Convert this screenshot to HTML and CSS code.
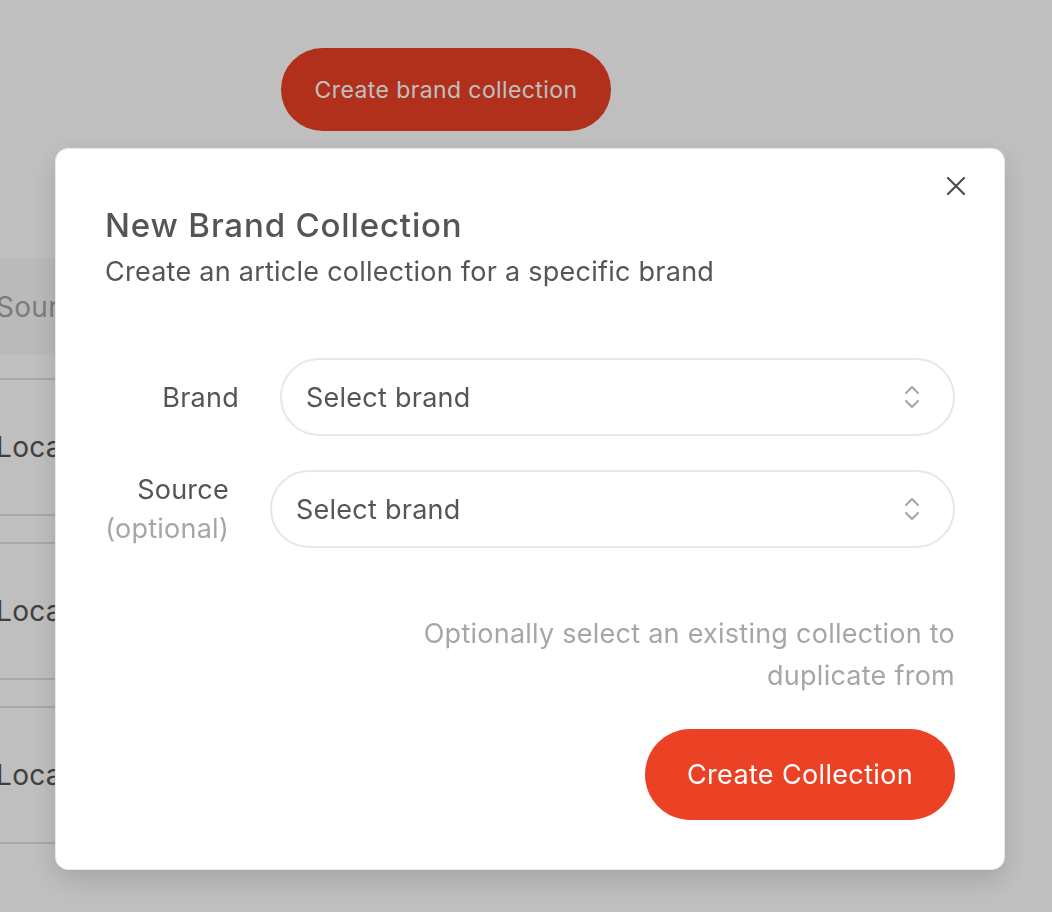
FILE: index.html
```html
<!DOCTYPE html>
<html lang="en">
<head>
<meta charset="utf-8">
<title>New Brand Collection</title>
<link rel="stylesheet" href="styles.css">
</head>
<body>
<main class="page">
  <div class="toolbar">
    <button class="btn btn-bg" type="button">Create brand collection</button>
  </div>
  <div class="table">
    <div class="thead"><span class="th">Source</span></div>
    <div class="trow"><span class="td">Local</span></div>
    <div class="trow"><span class="td">Local</span></div>
    <div class="trow"><span class="td">Local</span></div>
  </div>
</main>

<div class="overlay"></div>

<section class="modal" role="dialog" aria-labelledby="modal-title">
  <button class="close" type="button" aria-label="Close">
    <svg width="20" height="20" viewBox="0 0 20 20" fill="none" stroke="#4d4d4d" stroke-width="2.2" stroke-linecap="round"><path d="M2 2 L18 18 M18 2 L2 18"/></svg>
  </button>
  <h2 class="title" id="modal-title">New Brand Collection</h2>
  <p class="subtitle">Create an article collection for a specific brand</p>

  <div class="form">
    <div class="field">
      <label class="label label-brand">Brand</label>
      <div class="select">
        <span>Select brand</span>
        <svg class="chev" width="18" height="26" viewBox="0 0 18 26" fill="none" stroke="#a9a9a9" stroke-width="2.2" stroke-linecap="round" stroke-linejoin="round"><path d="M3 9 L9 3 L15 9"/><path d="M3 17 L9 23 L15 17"/></svg>
      </div>
    </div>
    <div class="field">
      <label class="label label-source">Source<span class="opt">(optional)</span></label>
      <div class="select">
        <span>Select brand</span>
        <svg class="chev" width="18" height="26" viewBox="0 0 18 26" fill="none" stroke="#a9a9a9" stroke-width="2.2" stroke-linecap="round" stroke-linejoin="round"><path d="M3 9 L9 3 L15 9"/><path d="M3 17 L9 23 L15 17"/></svg>
      </div>
    </div>
  </div>

  <p class="help">Optionally select an existing collection to<br>duplicate from</p>

  <div class="actions">
    <button class="btn btn-create" type="button">Create Collection</button>
  </div>
</section>
</body>
</html>
```
FILE: styles.css
```css
* { box-sizing: border-box; }
html, body { margin: 0; padding: 0; }
body {
  background: #ffffff;
  font-family: "Inter", "Noto Sans", sans-serif;
  color: #555555;
  width: 1052px;
  height: 912px;
  overflow: hidden;
}

.page { padding-top: 48px; }
.toolbar { padding-left: 281px; height: 83px; }

.btn {
  border: none;
  border-radius: 999px;
  background: #eb4125;
  color: #ffffff;
  font-family: inherit;
  cursor: pointer;
}
.btn-bg {
  height: 83px;
  width: 330px;
  font-size: 23px;
  letter-spacing: 0.4px;
}

.table {
  margin-top: 127px;
  margin-left: -4px;
  width: 900px;
}
.thead {
  height: 97px;
  background: #f8f8f8;
  display: flex;
  align-items: center;
  margin-bottom: 23px;
}
.th { font-size: 28px; color: #a6a6a6; letter-spacing: 0.3px; }
.trow {
  height: 138px;
  border-top: 2px solid #e0e0e0;
  border-bottom: 2px solid #e0e0e0;
  display: flex;
  align-items: center;
  margin-bottom: 26px;
}
.td { font-size: 28px; color: #555555; letter-spacing: 0.3px; }

.overlay {
  position: fixed;
  inset: 0;
  background: rgba(0, 0, 0, 0.25);
}

.modal {
  position: fixed;
  left: 55px;
  top: 148px;
  width: 950px;
  background: #ffffff;
  border: 1px solid #e6e8ec;
  border-radius: 13px;
  padding: 56px 49px 49px;
  box-shadow: 0 10px 26px rgba(0, 0, 0, 0.14);
}
.close {
  position: absolute;
  top: 26px;
  right: 37px;
  width: 22px;
  height: 22px;
  padding: 0;
  border: none;
  background: transparent;
  display: flex;
  align-items: center;
  justify-content: center;
}
.title {
  margin: 0;
  font-size: 33px;
  line-height: 40px;
  font-weight: 500;
  color: #555555;
  letter-spacing: 0.85px;
}
.subtitle {
  margin: 11px 0 0;
  font-size: 27px;
  line-height: 32px;
  letter-spacing: 0.25px;
  color: #555555;
}

.form {
  margin-top: 70px;
  display: flex;
  flex-direction: column;
  gap: 34px;
}
.field {
  display: flex;
  align-items: center;
  gap: 41px;
}
.label {
  font-size: 27px;
  line-height: 39px;
  letter-spacing: 0.25px;
  color: #555555;
  text-align: right;
  display: flex;
  flex-direction: column;
  align-items: flex-end;
}
.label-brand { width: 134px; }
.label-source { width: 124px; }
.opt { color: #a6a6a6; }

.select {
  flex: 1;
  height: 78px;
  border: 2px solid #e3e7ee;
  border-radius: 999px;
  display: flex;
  align-items: center;
  justify-content: space-between;
  padding: 0 32px 0 24px;
  font-size: 27px;
  letter-spacing: 0.25px;
  color: #555555;
}
.chev { display: block; }

.help {
  margin: 65px 0 0;
  text-align: right;
  font-size: 27px;
  line-height: 42px;
  letter-spacing: 0.25px;
  color: #a6a6a6;
}

.actions {
  margin-top: 32px;
  display: flex;
  justify-content: flex-end;
}
.btn-create {
  height: 91px;
  width: 310px;
  font-size: 27px;
  letter-spacing: 0.35px;
}
```
